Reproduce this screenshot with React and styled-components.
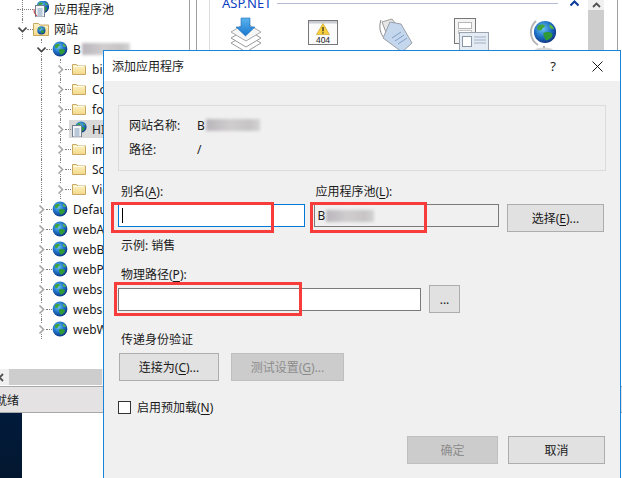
import React from 'react';
import styled, { createGlobalStyle } from 'styled-components';

const GlobalStyle = createGlobalStyle`
  html, body { margin: 0; padding: 0; background: #fff; }
  body {
    font-family: "Noto Sans", "Noto Sans CJK SC", sans-serif;
    font-size: 12px;
    color: #1a1a1a;
  }
  * { box-sizing: border-box; }
`;

const Desktop = styled.div`
  position: relative;
  width: 622px;
  height: 478px;
  overflow: hidden;
  background: #fff;
  display: flex;
  flex-direction: column;
`;

const Workspace = styled.div`
  display: flex;
  height: 369px;
  flex: none;
`;

const TreePane = styled.div`
  width: 190px;
  flex: none;
  margin-top: -1px;
  border-right: 1px solid #a0a0a0;
`;

const Row = styled.div`
  position: relative;
  display: flex;
  align-items: center;
  height: 20px;
  padding-left: ${(p) => 17 + p.$depth * 19}px;
  white-space: nowrap;
`;

const Selected = styled.span`
  position: absolute;
  left: 69px;
  top: 1px;
  bottom: 1px;
  width: 40px;
  background: #d9d9d9;
`;

const Guide = styled.span`
  position: absolute;
  left: ${(p) => p.$x}px;
  top: 0;
  bottom: 0;
  border-left: 1px dotted #808080;
`;

const Expander = styled.span`
  position: relative;
  width: 10px;
  height: 10px;
  flex: none;
  display: flex;
  align-items: center;
  justify-content: center;
  background: #fff;
`;

const Dots = styled.span`
  position: relative;
  width: ${(p) => p.$w ?? 6}px;
  flex: none;
  border-top: 1px dotted #808080;
`;

const TreeIcon = styled.svg`
  position: relative;
  width: 16px;
  height: 16px;
  flex: none;
`;

const TreeLabel = styled.span`
  position: relative;
  margin-left: 5px;
  display: inline-flex;
  align-items: center;
`;

const Smudge = styled.span`
  display: inline-block;
  width: ${(p) => p.$w}px;
  height: 12px;
  margin-left: 1px;
  background: linear-gradient(90deg, #b9b5bb, #cfcdce 45%, #c6c4c5 80%, #d4d3d3);
  filter: blur(1.5px);
`;

const SplitBar = styled.div`
  width: 7px;
  flex: none;
  border-right: 1px solid #a0a0a0;
`;

const ContentPane = styled.div`
  flex: 1;
  margin-left: 12px;
  display: flex;
  border-left: 1px solid #dcdcdc;
`;

const Features = styled.div`
  width: 378px;
  flex: none;
`;

const SectionHead = styled.div`
  display: flex;
  align-items: center;
  gap: 6px;
  height: 14px;
  margin-top: -4px;
  padding-left: 12px;
  padding-right: 9px;
  color: #0a3fc4;
  font-size: 13px;
  line-height: 14px;
`;

const SectionRule = styled.span`
  flex: 1;
  height: 1px;
  background: #b3bcd3;
`;

const FeatureIcons = styled.div`
  display: grid;
  grid-template-columns: repeat(5, 75px);
  margin-top: 7px;
  padding-left: 18px;
`;

const FeatureIcon = styled.svg`
  width: 36px;
  height: 36px;
`;

const VScroll = styled.div`
  width: 16px;
  flex: none;
  display: flex;
  flex-direction: column;
  background: #f0f0f0;
`;

const ScrollArrow = styled.div`
  height: 10px;
  display: flex;
  align-items: center;
  justify-content: center;
`;

const ScrollThumb = styled.div`
  flex: 1;
  background: #cdcdcd;
`;

const OuterEdge = styled.div`
  width: 1px;
  margin-left: 13px;
  flex: none;
  background: #a0a0a0;
`;

const HScroll = styled.div`
  display: flex;
  height: 16px;
  flex: none;
  width: 103px;
  background: #f0f0f0;
  border-right: 1px solid #f0f0f0;
`;

const HArrow = styled.div`
  width: 9px;
  display: flex;
  align-items: center;
  margin-left: -2px;
  flex: none;
  overflow: hidden;
`;

const HThumb = styled.div`
  flex: 1;
  margin-left: 2px;
  background: #cdcdcd;
`;

const StatusBar = styled.div`
  height: 27px;
  margin-top: 1px;
  flex: none;
  display: flex;
  align-items: center;
  background: #e4e2e3;
  border-top: 1px solid #a8a8a8;
  border-bottom: 1px solid #a8a8a8;
  font-size: 12px;
`;

const StatusText = styled.span`
  margin-left: -5px;
`;

const Wallpaper = styled.div`
  width: 22px;
  flex: 1;
  background: linear-gradient(180deg, #021b3c, #03172f);
`;

/* the dialog is a window lying over the manager */
const Dialog = styled.div`
  position: absolute;
  left: 103px;
  top: 50px;
  width: 518px;
  height: 440px;
  display: flex;
  flex-direction: column;
  background: #f0f0f0;
  border: 1px solid #1883d7;
`;

const TitleBar = styled.div`
  height: 30px;
  flex: none;
  display: flex;
  align-items: center;
  padding: 0 17px 0 8px;
  background: #fff;
`;

const Title = styled.span`
  flex: 1;
`;

const TitleHelp = styled.span`
  margin-right: 36px;
  font-size: 13px;
`;

const DialogBody = styled.div`
  padding: 24px 14px 0 14px;
`;

const InfoBox = styled.div`
  height: 66px;
  padding: 10px 10px;
  border: 1px solid #dcdcdc;
`;

const InfoRow = styled.div`
  display: flex;
  align-items: center;
  height: 18px;
  margin-bottom: 6px;
`;

const InfoKey = styled.span`
  width: 68px;
  flex: none;
`;

const FieldGrid = styled.div`
  display: grid;
  grid-template-columns: 187px 185px 97px;
  column-gap: 8.5px;
  row-gap: 3px;
  margin-top: 12px;
  align-items: start;
`;

const Label = styled.div`
  height: 18px;
  line-height: 18px;
  padding-left: ${(p) => p.$inset ?? 3}px;
  margin-top: ${(p) => p.$top ?? 0}px;
`;

const Key = styled.span`
  text-decoration: underline;
  text-underline-offset: 2px;
`;

const TextBox = styled.div`
  height: 23px;
  width: ${(p) => (p.$w ? `${p.$w}px` : 'auto')};
  display: flex;
  align-items: center;
  padding-left: 3px;
  background: ${(p) => (p.$readOnly ? '#f0f0f0' : '#fff')};
  border: 1px solid ${(p) => (p.$focused ? '#0078d7' : '#7a7a7a')};
`;

const Caret = styled.span`
  width: 1px;
  height: 15px;
  background: #000;
`;

const Button = styled.div`
  height: 28px;
  width: ${(p) => (p.$w ? `${p.$w}px` : 'auto')};
  flex: none;
  display: flex;
  align-items: center;
  justify-content: center;
  background: ${(p) => (p.$off ? '#cccccc' : '#e1e1e1')};
  border: 1px solid ${(p) => (p.$off ? '#bfbfbf' : '#adadad')};
  color: ${(p) => (p.$off ? '#8c8c8c' : '#1a1a1a')};
`;

const PathRow = styled.div`
  display: flex;
  align-items: center;
  gap: 8px;
  height: 28px;
  margin-top: 1px;
`;

const AuthButtons = styled.div`
  display: flex;
  gap: 12px;
  margin: 4px 0 0 1px;
`;

const CheckRow = styled.div`
  display: flex;
  align-items: center;
  gap: 6px;
  height: 18px;
  margin-top: 17px;
`;

const CheckBox = styled.span`
  width: 13px;
  height: 13px;
  flex: none;
  margin-top: 1px;
  background: #fff;
  border: 1px solid #333;
`;

const Footer = styled.div`
  display: flex;
  justify-content: flex-end;
  gap: 10px;
  margin-top: 20px;
  padding-right: 1px;
`;

/* red marks painted on the screenshot */
const Mark = styled.div`
  position: absolute;
  left: ${(p) => p.$x}px;
  top: ${(p) => p.$y}px;
  width: ${(p) => p.$w}px;
  height: ${(p) => p.$h}px;
  border: 3px solid #f83b3b;
`;

const Defs = () => (
  <svg width="0" height="0" style={{ position: 'absolute' }}>
    <defs>
      <radialGradient id="sea" cx="0.4" cy="0.35" r="0.7">
        <stop offset="0" stopColor="#6cc4f2" />
        <stop offset="0.55" stopColor="#1c6fc4" />
        <stop offset="1" stopColor="#0d2f7e" />
      </radialGradient>
      <linearGradient id="folder" x1="0" y1="0" x2="0" y2="1">
        <stop offset="0" stopColor="#fdf3c8" />
        <stop offset="1" stopColor="#f3d98a" />
      </linearGradient>
      <linearGradient id="arrow" x1="0" y1="0" x2="0" y2="1">
        <stop offset="0" stopColor="#5cb4ee" />
        <stop offset="1" stopColor="#1676cf" />
      </linearGradient>
    </defs>
  </svg>
);

const GlobeArt = () => (
  <>
    <circle cx="8" cy="8" r="7.4" fill="url(#sea)" />
    <path d="M3.5 3.5c2-.8 3.6-.6 4.6.3-.4 1.2-1.600 1-2 2.200-.6 1.300-2 1-3 .5-.5-1-.2-2 .4-3z" fill="#3fa53a" />
    <path d="M7 8.500c2-.9 4-.5 5.500.3.800.7.500 2.300-.6 3.200-1 1-2.300 1.900-3.600 1.400-.4-1.500-1.800-3.200-1.300-4.900z" fill="#2f9a38" />
    <path d="M11 2.800c1.500.5 2.600 1.800 3 3.200-1 .2-2.300-.2-3-1.200z" fill="#58b846" />
  </>
);

const Page = () => (
  <>
    <rect x="1.500" y="3.500" width="9" height="11.500" fill="#f4f6f9" stroke="#6f7f90" />
    <path d="M3.500 7h5M3.500 9h5M3.500 11h5M3.500 13h5" stroke="#7f9ab8" />
  </>
);

const icons = {
  globe: <GlobeArt />,
  folder: (
    <>
      <path d="M1.500 13.500V3.500h4l1.500 1.500h7.500v8.500z" fill="url(#folder)" stroke="#c8a860" />
      <path d="M2.500 5.500h11" stroke="#fffbe6" />
    </>
  ),
  sites: (
    <>
      <path d="M.5 14.500V2.500h5l1.500 1.500h8.500v10.500z" fill="url(#folder)" stroke="#c8a860" />
      <g transform="translate(4 5) scale(.55)"><GlobeArt /></g>
    </>
  ),
  app: (
    <>
      <g transform="translate(4 0) scale(.75)"><GlobeArt /></g>
      <g transform="translate(0 1)"><Page /></g>
    </>
  ),
  pool: (
    <>
      <g transform="translate(3 -1) scale(.85)"><GlobeArt /></g>
      <g transform="translate(1 1)"><Page /></g>
      <path d="M1 8a7 7 0 0 0 3 7" fill="none" stroke="#c33" />
    </>
  ),
};

const Chevron = ({ open }) => (
  <svg width="9" height="9" viewBox="0 0 9 9">
    {open
      ? <path d="M.5 2.500l4 4 4-4" fill="none" stroke="#444" strokeWidth="1.600" />
      : <path d="M2.500.5l4 4-4 4" fill="none" stroke="#a6a6a6" strokeWidth="1.600" />}
  </svg>
);

const child = [41, 60];
const site = [41];

const treeRows = [
  { depth: 0, icon: 'pool', text: '应用程序池', guides: [22], noExpander: true },
  { depth: 0, icon: 'sites', text: '网站', open: true, guides: [22] },
  { depth: 1, icon: 'globe', text: 'B', smudge: 48, open: true, guides: site },
  { depth: 2, icon: 'folder', text: 'bin', guides: child },
  { depth: 2, icon: 'folder', text: 'Content', guides: child },
  { depth: 2, icon: 'folder', text: 'fonts', guides: child },
  { depth: 2, icon: 'app', text: 'HID', guides: child, selected: true },
  { depth: 2, icon: 'folder', text: 'images', guides: child },
  { depth: 2, icon: 'folder', text: 'Scripts', guides: child },
  { depth: 2, icon: 'folder', text: 'Views', guides: child },
  { depth: 1, icon: 'globe', text: 'Default', guides: site },
  { depth: 1, icon: 'globe', text: 'webApi', guides: site },
  { depth: 1, icon: 'globe', text: 'webBack', guides: site },
  { depth: 1, icon: 'globe', text: 'webPortal', guides: site },
  { depth: 1, icon: 'globe', text: 'websiteA', guides: site },
  { depth: 1, icon: 'globe', text: 'websiteB', guides: site },
  { depth: 1, icon: 'globe', text: 'webWork', guides: site },
];

const TreeRow = ({ row }) => (
  <Row $depth={row.depth}>
    {row.selected && <Selected />}
    {row.guides.map((x) => <Guide key={x} $x={x} />)}
    {row.noExpander ? <Dots $w={16} /> : (
      <>
        <Expander><Chevron open={row.open} /></Expander>
        <Dots />
      </>
    )}
    <TreeIcon viewBox="0 0 16 16">{icons[row.icon]}</TreeIcon>
    <TreeLabel>
      {row.text}
      {row.smudge && <Smudge $w={row.smudge} />}
    </TreeLabel>
  </Row>
);

const StackIcon = () => (
  <FeatureIcon viewBox="0 0 36 36">
    <path d="M3 26l15-9 15 9-15 9z" fill="#fff" stroke="#9a9a9a" />
    <path d="M3 21l15-9 15 9-15 9z" fill="#fff" stroke="#9a9a9a" />
    <path d="M3 15L18 6l15 9-15 9z" fill="#f7f7f7" stroke="#a8a8a8" />
    <path d="M13 1h9v9h5l-9.500 9L8 10h5z" fill="url(#arrow)" stroke="#1a6cb8" strokeWidth=".6" />
  </FeatureIcon>
);

const ErrorPageIcon = () => (
  <FeatureIcon viewBox="0 0 36 36">
    <rect x="5.500" y="3.500" width="29" height="24" fill="#fbfbfb" stroke="#777" />
    <path d="M6 4h28v2.500H6z" fill="#c9ccd2" />
    <path d="M20 6.500l6.500 11h-13z" fill="#f7cf3c" stroke="#c79a1a" strokeWidth=".6" />
    <path d="M20 10v4.200M20 15.200v1.200" stroke="#222" strokeWidth="1.200" />
    <text x="20" y="26" textAnchor="middle" fontSize="8.500" fontFamily="Liberation Sans, sans-serif" fill="#222">404</text>
  </FeatureIcon>
);

const TagIcon = () => (
  <FeatureIcon viewBox="0 0 36 36">
    <path d="M3 3c-3 8 0 18 7 20" fill="none" stroke="#888" />
    <path d="M4 5l10-3 3 4-4 9-4 3z" fill="#e6e6e6" stroke="#9c9c9c" />
    <path d="M12 5l11 2 11 19-10 9-19-14z" fill="#c4d7ed" stroke="#9a9fa8" />
    <path d="M14 21l9-6M17 24l9-6M20 27l9-6" stroke="#7f9fc9" />
  </FeatureIcon>
);

const PagesIcon = () => (
  <FeatureIcon viewBox="0 0 36 36">
    <rect x="1.500" y="1.500" width="21" height="25" fill="#f3f3f3" stroke="#777" />
    <rect x="5.500" y="5.500" width="13" height="6" fill="#fff" stroke="#b5b5b5" />
    <rect x="5.500" y="13.500" width="13" height="3" fill="#fff" stroke="#c5c5c5" />
    <rect x="6.500" y="15.500" width="29" height="18" fill="#e5ebf3" stroke="#9aa3ae" />
    <rect x="9.500" y="19.500" width="9" height="10" fill="#fff" stroke="#8a97a8" />
    <path d="M21 20h12M21 23h12M21 26h12" stroke="#9fb0c6" />
  </FeatureIcon>
);

const StandGlobeIcon = () => (
  <FeatureIcon viewBox="0 0 36 36">
    <path d="M8 4a15 15 0 0 0 2 24" fill="none" stroke="#b5b5b5" strokeWidth="2" />
    <path d="M16 29v3" stroke="#aaa" strokeWidth="2" />
    <ellipse cx="16" cy="33" rx="9" ry="2.500" fill="#d6d6d6" />
    <g transform="translate(5 3) scale(1.500)"><GlobeArt /></g>
  </FeatureIcon>
);

const App = () => (
  <>
    <GlobalStyle />
    <Defs />
    <Desktop>
      <Workspace>
        <TreePane>
          {treeRows.map((row, i) => <TreeRow key={i} row={row} />)}
        </TreePane>
        <SplitBar />
        <ContentPane>
          <Features>
            <SectionHead>
              ASP.NET
              <SectionRule />
              <svg width="9" height="7" viewBox="0 0 9 7" style={{ marginLeft: 6 }}>
                <path d="M.5 5.500l4-4 4 4" fill="none" stroke="#0a3a9c" strokeWidth="2" />
              </svg>
            </SectionHead>
            <FeatureIcons>
              <StackIcon />
              <ErrorPageIcon />
              <TagIcon />
              <PagesIcon />
              <StandGlobeIcon />
            </FeatureIcons>
          </Features>
          <VScroll>
            <ScrollArrow>
              <svg width="9" height="6" viewBox="0 0 9 6">
                <path d="M1 5l3.500-3.500L8 5" fill="none" stroke="#505050" strokeWidth="1.800" />
              </svg>
            </ScrollArrow>
            <ScrollThumb />
          </VScroll>
          <OuterEdge />
        </ContentPane>
      </Workspace>
      <HScroll>
        <HArrow>
          <svg width="6" height="9" viewBox="0 0 6 9">
            <path d="M5 1L1.500 4.500 5 8" fill="none" stroke="#505050" strokeWidth="1.800" />
          </svg>
        </HArrow>
        <HThumb />
      </HScroll>
      <StatusBar><StatusText>就绪</StatusText></StatusBar>
      <Wallpaper />

      <Dialog>
        <TitleBar>
          <Title>添加应用程序</Title>
          <TitleHelp>?</TitleHelp>
          <svg width="11" height="11" viewBox="0 0 11 11">
            <path d="M.5.5l10 10M10.500.5l-10 10" stroke="#1a1a1a" />
          </svg>
        </TitleBar>
        <DialogBody>
          <InfoBox>
            <InfoRow>
              <InfoKey>网站名称:</InfoKey>
              B<Smudge $w={54} />
            </InfoRow>
            <InfoRow>
              <InfoKey>路径:</InfoKey>
              /
            </InfoRow>
          </InfoBox>
          <FieldGrid>
            <Label>别名(<Key>A</Key>):</Label>
            <Label $inset={2}>应用程序池(<Key>L</Key>):</Label>
            <span />
            <TextBox $focused><Caret /></TextBox>
            <TextBox $readOnly>B<Smudge $w={48} /></TextBox>
            <Button>选择(<Key>E</Key>)...</Button>
          </FieldGrid>
          <Label $top={5}>示例: 销售</Label>
          <Label $top={11}>物理路径(<Key>P</Key>):</Label>
          <PathRow>
            <TextBox $w={303} />
            <Button $w={31}>...</Button>
          </PathRow>
          <Label $top={18}>传递身份验证</Label>
          <AuthButtons>
            <Button $w={100}>连接为(<Key>C</Key>)...</Button>
            <Button $w={113} $off>测试设置(<Key>G</Key>)...</Button>
          </AuthButtons>
          <CheckRow>
            <CheckBox />
            <span>启用预加载(<Key>N</Key>)</span>
          </CheckRow>
          <Footer>
            <Button $w={91} $off>确定</Button>
            <Button $w={97}>取消</Button>
          </Footer>
        </DialogBody>
      </Dialog>

      <Mark $x={111} $y={202} $w={163} $h={31} />
      <Mark $x={310} $y={202} $w={117} $h={31} />
      <Mark $x={114} $y={282} $w={188} $h={34} />
    </Desktop>
  </>
);

export default App;
